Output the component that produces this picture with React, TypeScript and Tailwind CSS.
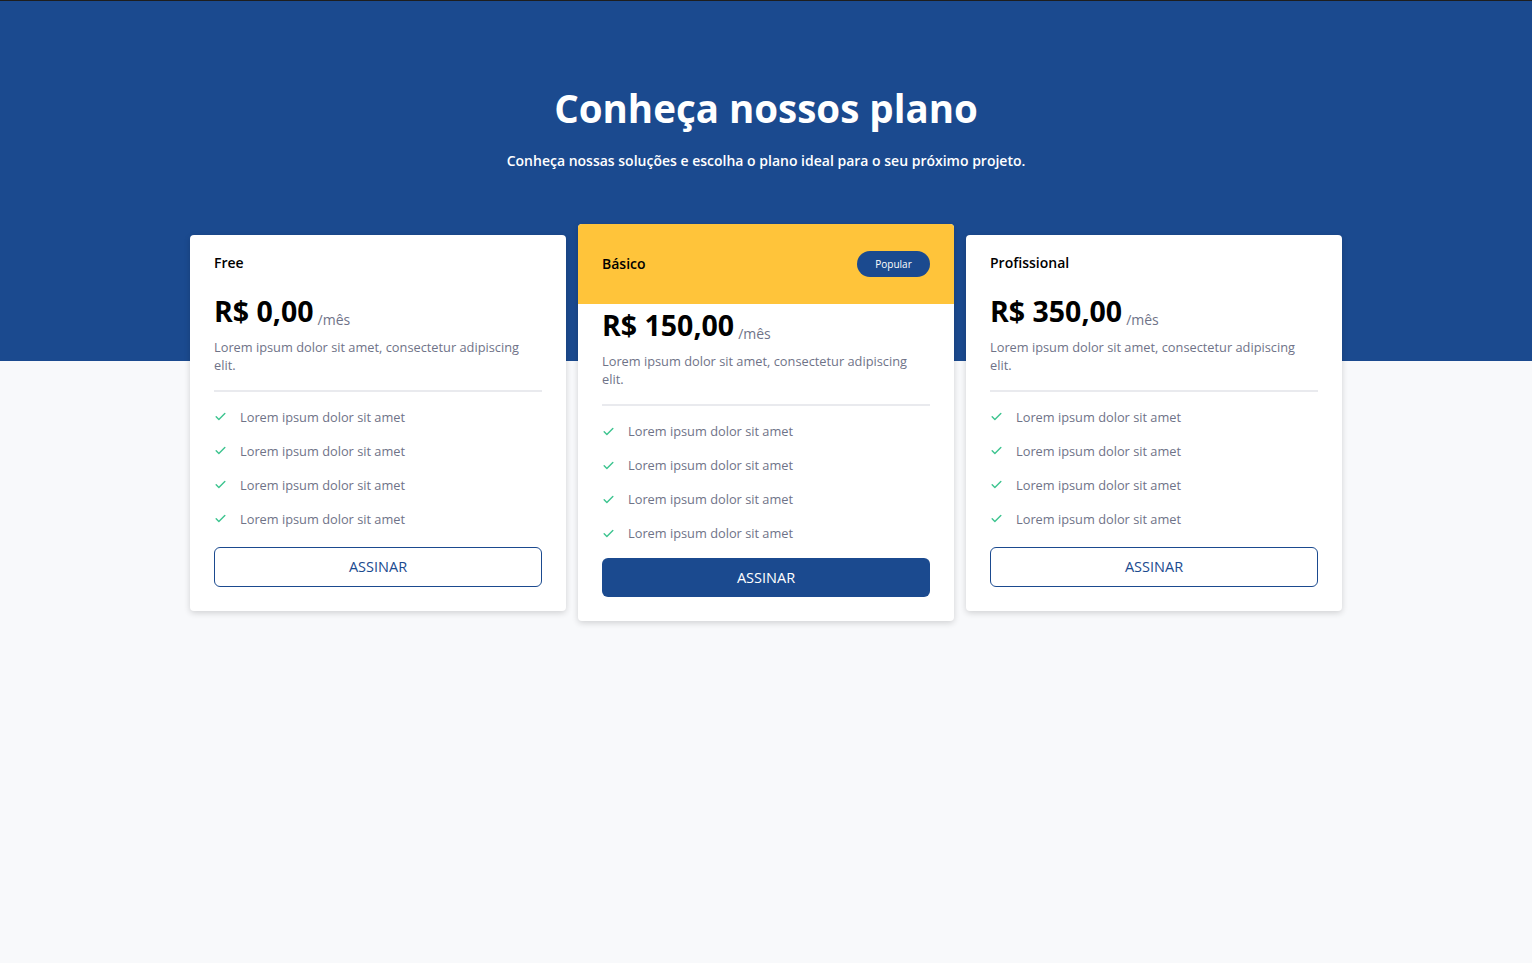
import React from "react";

type Plan = {
  name: string;
  price: string;
  popular?: boolean;
};

const plans: Plan[] = [
  { name: "Free", price: "R$ 0,00" },
  { name: "Básico", price: "R$ 150,00", popular: true },
  { name: "Profissional", price: "R$ 350,00" },
];

const features = [
  "Lorem ipsum dolor sit amet",
  "Lorem ipsum dolor sit amet",
  "Lorem ipsum dolor sit amet",
  "Lorem ipsum dolor sit amet",
];

function Check() {
  return (
    <svg width="13" height="13" viewBox="0 0 24 24" fill="none" stroke="#3cc48f" strokeWidth="2.6" strokeLinecap="round" strokeLinejoin="round">
      <path d="M4 12.5l5 5L20 6.5" />
    </svg>
  );
}

function PlanCard({ plan }: { plan: Plan }) {
  return (
    <div className="flex w-[376px] flex-col overflow-hidden rounded-[4px] bg-white shadow-[0_2px_6px_rgba(0,0,0,0.16)]">
      {plan.popular ? (
        <div className="flex h-[80px] items-center justify-between bg-[#ffc43a] px-6">
          <span className="text-[14px] font-semibold leading-5 text-black">{plan.name}</span>
          <span className="flex h-[26px] w-[73px] items-center justify-center rounded-full bg-[#1b4a8f] text-[10px] text-white">
            Popular
          </span>
        </div>
      ) : (
        <div className="px-6 pt-[15px]">
          <span className="text-[14px] font-semibold leading-5 text-black">{plan.name}</span>
        </div>
      )}
      <div className={`px-6 pb-6 ${plan.popular ? "pt-[3px]" : "pt-[19px]"}`}>
        <div className="flex items-baseline gap-1">
          <span className="text-[28.5px] font-bold leading-9 text-black">{plan.price}</span>
          <span className="translate-y-[3px] text-[14px] text-[#6f7388]">/mês</span>
        </div>
        <p className="mt-[9px] text-[12.8px] leading-[18px] text-[#6f7388]">
          Lorem ipsum dolor sit amet, consectetur adipiscing elit.
        </p>
        <div className="mt-4 h-[2px] bg-[#e9eaee]" />
        <ul className="mt-[15px] flex flex-col gap-[14px]">
          {features.map((f, i) => (
            <li key={i} className="flex items-center gap-[13px] text-[12.8px] leading-5 text-[#6f7388]">
              <Check />
              {f}
            </li>
          ))}
        </ul>
        {plan.popular ? (
          <button className="mt-[15px] h-[39px] w-full rounded-[6px] bg-[#1b4a8f] text-[14.5px] text-white">
            ASSINAR
          </button>
        ) : (
          <button className="mt-[18px] h-[40px] w-full rounded-[6px] border border-[#1b4a8f] bg-white text-[14.5px] text-[#1b4a8f]">
            ASSINAR
          </button>
        )}
      </div>
    </div>
  );
}

export default function App() {
  return (
    <main className="min-h-screen border-t border-[#1e1e1e] bg-[#f8f9fb] font-['Open_Sans',sans-serif]">
      <section className="flex h-[360px] flex-col items-center bg-[#1b4a8f] pt-[80px] text-white">
        <h1 className="text-[38.5px] font-bold leading-[54px]">Conheça nossos plano</h1>
        <p className="mt-[16px] text-[14px] font-semibold leading-5">
          Conheça nossas soluções e escolha o plano ideal para o seu próximo projeto.
        </p>
      </section>
      <div className="-mt-[137px] flex items-center justify-center gap-3 pb-10">
        {plans.map((p) => (
          <PlanCard key={p.name} plan={p} />
        ))}
      </div>
    </main>
  );
}
